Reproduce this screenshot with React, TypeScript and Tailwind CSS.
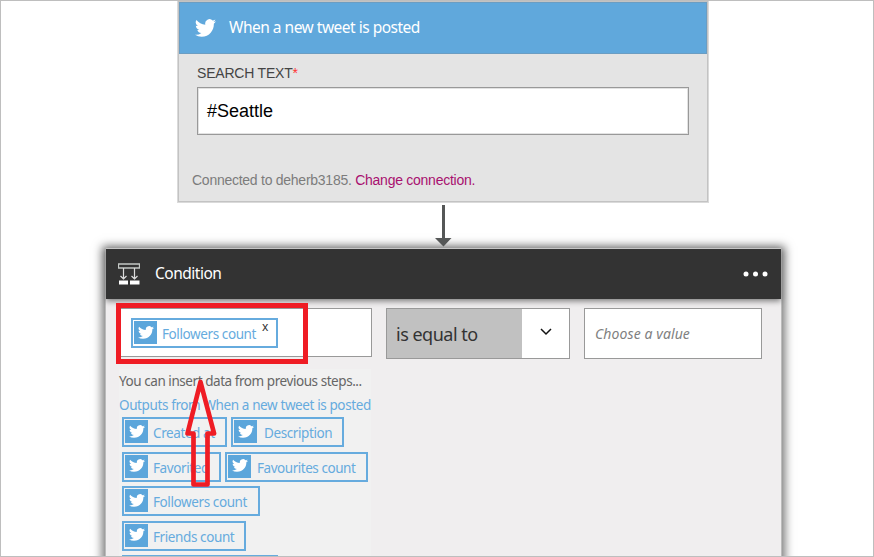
import React from "react";

function Bird({ className }: { className: string }) {
  return (
    <svg viewBox="0 2 24 20" className={className} fill="currentColor" preserveAspectRatio="none">
      <path d="M23.95 4.57a10 10 0 0 1-2.82.77 4.96 4.96 0 0 0 2.16-2.72c-.95.55-2 .96-3.13 1.18a4.92 4.92 0 0 0-8.38 4.48C7.69 8.1 4.07 6.13 1.64 3.16a4.93 4.93 0 0 0 1.52 6.57 4.9 4.9 0 0 1-2.23-.61v.06c0 2.39 1.7 4.38 3.95 4.83a5 5 0 0 1-2.21.08 4.94 4.94 0 0 0 4.6 3.42A9.87 9.87 0 0 1 0 19.54a14 14 0 0 0 7.55 2.21c9.05 0 14-7.5 14-13.98 0-.21 0-.42-.02-.63a9.94 9.94 0 0 0 2.46-2.55z" />
    </svg>
  );
}

function Chip({ label, width, text, closable = false }: { label: string; width: string; text: string; closable?: boolean }) {
  return (
    <div className={`flex h-[30px] shrink-0 items-start border-2 border-[#66abde] pl-px pt-px ${width} ${closable ? "bg-white" : "bg-[#f1f1f1]"}`}>
      <span className="flex size-[23px] shrink-0 items-center justify-center bg-[#5ca6db] text-white">
        <Bird className="-mt-px h-[13px] w-[16px]" />
      </span>
      <span className={`ml-[5px] whitespace-nowrap pt-[2px] text-[13.5px] leading-[22px] text-[#66abde] ${text}`}>{label}</span>
      {closable && <span className="-mt-[2px] ml-[6px] text-[12px] leading-[16px] text-[#333]">x</span>}
    </div>
  );
}

function DownArrow() {
  return (
    <svg width="18" height="43" viewBox="0 0 18 43" className="ml-[433px]" fill="#555757">
      <path d="M8 1h3v33h6.5L9.500 42.500 1 34h7z" />
    </svg>
  );
}

function TriggerCard() {
  return (
    <section className="ml-[176px] flex h-[202px] w-[532px] shrink-0 flex-col border border-t-0 border-[#dadada] bg-[#e4e4e4]">
      <div className="flex flex-1 flex-col border border-[#c3c3c3]">
        <header className="flex h-[52px] items-center border border-[#6b9dc2] bg-[#60a8dc] pl-[15px] text-white">
          <Bird className="h-[18px] w-[21px]" />
          <h1 className="ml-[13px] whitespace-nowrap text-[15.5px] tracking-[-0.5px]">When a new tweet is posted</h1>
        </header>
        <div className="flex flex-1 flex-col pl-[18px] font-['Liberation_Sans',Arial,sans-serif]">
          <label className="mt-[10px] text-[14px] leading-[18px] tracking-[-0.2px] text-[#444]">
            SEARCH TEXT<span className="text-[#f33]">*</span>
          </label>
          <div className="mt-[5px] flex h-[48px] w-[492px] items-center border border-[#999] bg-white pl-[9px] text-[18px] text-black shadow-[inset_0_0_0_1px_#e2e2e2]">
            #Seattle
          </div>
          <p className="-ml-[5px] mt-[36px] text-[14px] leading-[18px] tracking-[-0.26px] text-[#7c7c7c]">
            Connected to deherb3185. <a className="text-[#a8106f]">Change connection.</a>
          </p>
        </div>
      </div>
    </section>
  );
}

function ConditionIcon() {
  return (
    <svg width="22" height="22" viewBox="0 0 22 22" fill="none" stroke="#dcdcdc">
      <path d="M.5 1v4h21V1z" stroke="#c4c8c5" strokeWidth="1.300" />
      <path d="M5.500 5v11M16.500 5v11M2.500 13l3 3 3-3M13.500 13l3 3 3-3" strokeWidth="1.200" />
      <path d="M1 17.500h9v4H1zM12 17.500h9.500v4H12z" fill="#fff" stroke="none" />
    </svg>
  );
}

function ConditionCard() {
  return (
    <section className="ml-[104px] flex w-[677px] flex-1 flex-col border-l border-r border-[#bbb] bg-[#f0eeef] shadow-[0_1px_9px_3px_#777]">
      <header className="relative flex h-[51px] shrink-0 items-center border-t border-[#c6c6c6] bg-[#333] pl-[12px] pr-[13px] text-white shadow-[0_2px_6px_#777]">
        <ConditionIcon />
        <h2 className="ml-[15px] text-[15.5px] tracking-[-0.5px]">Condition</h2>
        <svg width="25" height="6" viewBox="0 0 25 6" className="ml-auto" fill="#fff">
          <circle cx="3" cy="3" r="2.500" />
          <circle cx="12.500" cy="3" r="2.500" />
          <circle cx="22" cy="3" r="2.500" />
        </svg>
      </header>
      <div className="relative mt-[9px] flex shrink-0 items-start pl-[13px]">
        <div className="flex h-[49px] w-[253px] border border-[#999] bg-white pl-[11px] pt-[9px]">
          <Chip label="Followers count" width="w-[147px]" text="tracking-[-0.4px]" closable />
        </div>
        <div className="ml-[14px] flex h-[51px] w-[184px] border border-[#999] bg-white">
          <div className="flex w-[135px] items-center bg-[#c1c1c1] pl-[9px] pt-px text-[18px] tracking-[-0.5px] text-[#333]">is equal to</div>
          <div className="flex flex-1 items-center justify-center">
            <svg width="12" height="8" viewBox="0 0 12 8" className="-mt-[4px]" fill="none" stroke="#111" strokeWidth="1.500">
              <path d="M1 1l5 5 5-5" />
            </svg>
          </div>
        </div>
        <div className="ml-[14px] flex h-[51px] w-[178px] items-center border border-[#999] bg-white pl-[10px] text-[14px] italic tracking-[0.1px] text-[#808080]">
          Choose a value
        </div>
      </div>
      <div className="ml-[13px] mt-[10px] w-[252px] bg-[#f1f1f1]">
        <p className="whitespace-nowrap text-[13.5px] leading-[24px] tracking-[-0.44px] text-[#666]">You can insert data from previous steps...</p>
        <p className="whitespace-nowrap text-[13.5px] leading-[24px] tracking-[-0.39px] text-[#66abde]">Outputs from When a new tweet is posted</p>
        <div className="flex flex-col gap-[4.500px] pl-[3px]">
          <div className="flex gap-[4px]">
            <Chip label="Created at" width="w-[105px]" text="tracking-[-0.4px]" />
            <Chip label="Description" width="w-[113px]" text="pl-[2px] tracking-[-0.4px]" />
          </div>
          <div className="flex gap-[4px]">
            <Chip label="Favorited" width="w-[99px]" text="tracking-[-0.4px]" />
            <Chip label="Favourites count" width="w-[143px]" text="pl-px tracking-[-0.46px]" />
          </div>
          <Chip label="Followers count" width="w-[138px]" text="tracking-[-0.4px]" />
          <Chip label="Friends count" width="w-[124px]" text="tracking-[-0.4px]" />
          <div className="h-[30px] w-[156px] border-2 border-[#66abde]" />
        </div>
      </div>
    </section>
  );
}

export default function App() {
  return (
    <main className="relative flex h-[557px] w-[874px] flex-col overflow-hidden border border-[#bebebe] bg-white font-['Noto_Sans','Open_Sans',sans-serif]">
      <TriggerCard />
      <div className="relative z-10 h-[45px] shrink-0 pt-px">
        <DownArrow />
      </div>
      <div className="flex h-[309px] shrink-0 flex-col">
        <ConditionCard />
      </div>
      <div className="absolute left-[115px] top-[302px] h-[61px] w-[192px] border-[5px] border-[#ef1c24]" />
      <svg width="34" height="112" viewBox="0 0 34 112" className="absolute left-[183px] top-[376px]" fill="none" stroke="#ef1c24" strokeWidth="4.700" strokeLinejoin="round">
        <path d="M16.500 5L3.500 56.500h6v51h14v-51h6.600z" />
      </svg>
    </main>
  );
}
